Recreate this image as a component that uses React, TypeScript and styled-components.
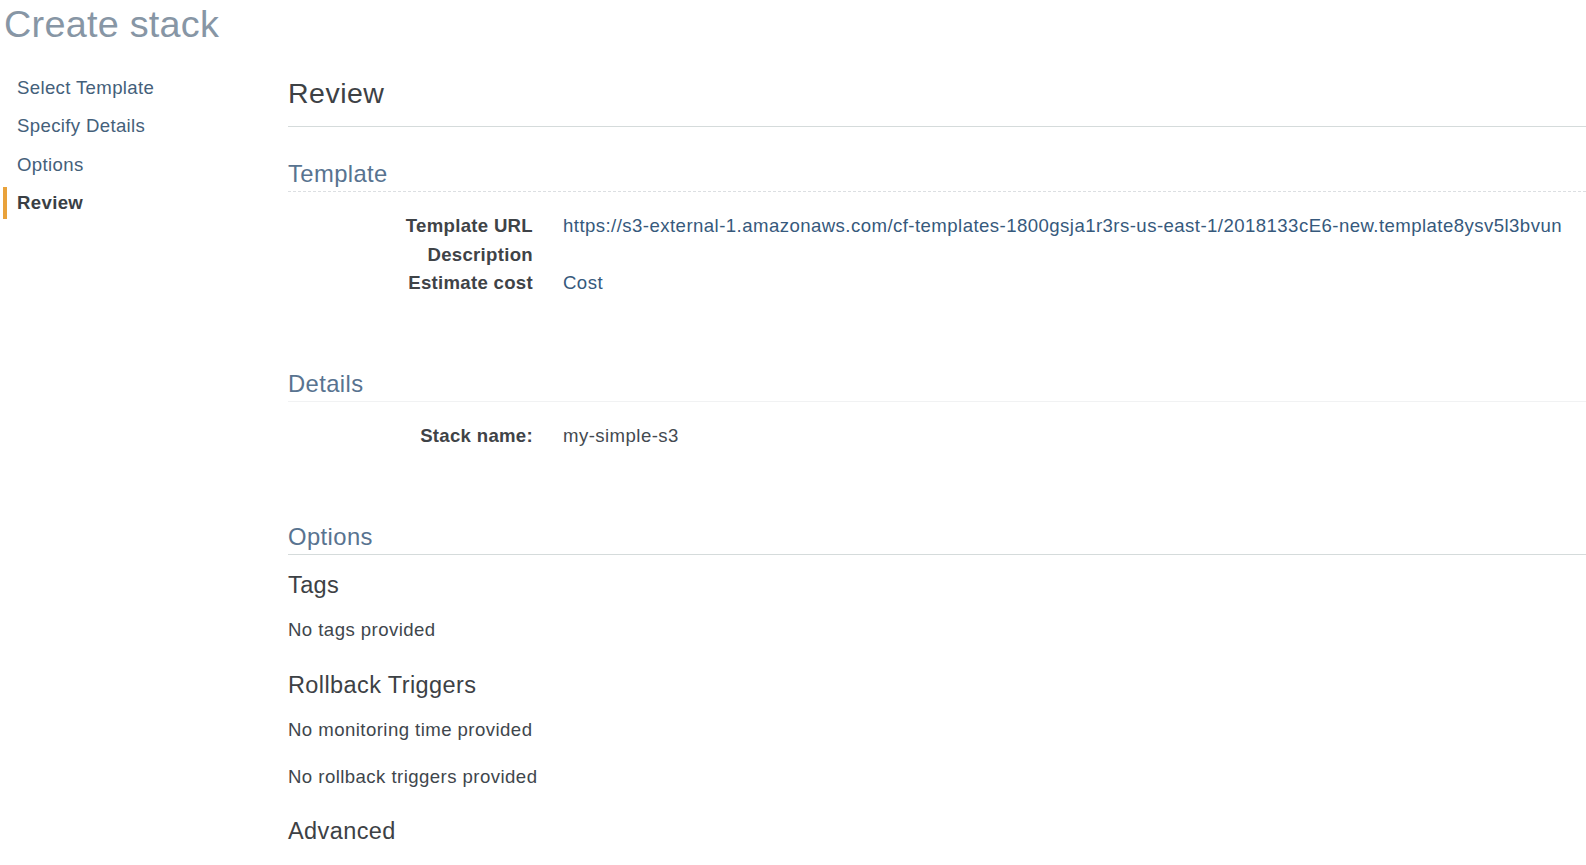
import React from "react";
import styled, { createGlobalStyle } from "styled-components";

const GlobalStyle = createGlobalStyle`
  html, body {
    margin: 0;
    padding: 0;
    background: #ffffff;
  }
  body {
    font-family: "Liberation Sans", Arial, Helvetica, sans-serif;
    color: #444;
    -webkit-font-smoothing: antialiased;
  }
  * { box-sizing: border-box; }
`;

const Page = styled.div`
  width: 1586px;
  height: 865px;
  overflow: hidden;
`;

const PageTitle = styled.h1`
  margin: 2px 0 0 4px;
  font-size: 37.8px;
  line-height: 44px;
  font-weight: 400;
  letter-spacing: 0.25px;
  color: #8796a5;
`;

const Body = styled.div`
  display: flex;
  align-items: flex-start;
`;

const Sidebar = styled.nav`
  width: 288px;
  flex: none;
  padding-top: 25.6px;
  display: flex;
  flex-direction: column;
  gap: 6.5px;
`;

const NavItem = styled.a<{ $active?: boolean }>`
  display: block;
  margin-left: 3px;
  padding-left: 10px;
  border-left: 4px solid ${(p) => (p.$active ? "#e9a23b" : "transparent")};
  font-size: 18.6px;
  line-height: 32px;
  letter-spacing: 0.35px;
  font-weight: ${(p) => (p.$active ? 700 : 400)};
  color: ${(p) => (p.$active ? "#3a3f45" : "#44607a")};
  text-decoration: none;
  white-space: nowrap;
`;

const Main = styled.main`
  flex: 1;
  min-width: 0;
  padding-top: 29.3px;
`;

const StepTitle = styled.h2`
  margin: 0;
  font-size: 28.5px;
  line-height: 36px;
  font-weight: 400;
  letter-spacing: 0.5px;
  color: #3d4145;
  padding-bottom: 14.7px;
  border-bottom: 1px solid #d5dbdb;
`;

const Section = styled.section<{ $gapTop: number }>`
  margin-top: ${(p) => p.$gapTop}px;
`;

const SectionTitle = styled.h3<{ $line: string }>`
  margin: 0;
  font-size: 23.8px;
  line-height: 30px;
  font-weight: 400;
  letter-spacing: 0.4px;
  color: #587390;
  padding-bottom: 2.6px;
  border-bottom: 1px ${(p) => p.$line};
`;

const KeyValues = styled.dl`
  margin: 19.8px 0 0 0;
  display: grid;
  grid-template-columns: 245px 1fr;
  column-gap: 30px;
  font-size: 18.6px;
  line-height: 28.5px;
`;

const Key = styled.dt`
  margin: 0;
  text-align: right;
  font-weight: 700;
  letter-spacing: 0.3px;
  color: #3f4347;
  white-space: nowrap;
`;

const Value = styled.dd<{ $link?: boolean }>`
  margin: 0;
  letter-spacing: 0.44px;
  color: ${(p) => (p.$link ? "#36597c" : "#444a50")};
  white-space: nowrap;
`;

const OptionsBody = styled.div`
  display: block;
`;

const SubTitle = styled.h4`
  margin: 26.4px 0 17px 0;
  font-size: 23.5px;
  line-height: 28px;
  font-weight: 400;
  letter-spacing: 0.4px;
  color: #3d4145;
  &:first-child {
    margin-top: 15.2px;
  }
`;

const Note = styled.p`
  margin: 17px 0 18.5px 0;
  font-size: 18.6px;
  line-height: 28.5px;
  letter-spacing: 0.44px;
  color: #40464c;
  white-space: nowrap;
`;

const steps = ["Select Template", "Specify Details", "Options", "Review"];

export default function App() {
  return (
    <Page>
      <GlobalStyle />
      <PageTitle>Create stack</PageTitle>
      <Body>
        <Sidebar>
          {steps.map((s) => (
            <NavItem key={s} $active={s === "Review"}>
              {s}
            </NavItem>
          ))}
        </Sidebar>
        <Main>
          <StepTitle>Review</StepTitle>

          <Section $gapTop={31.9}>
            <SectionTitle $line="dashed #dcdfe2">Template</SectionTitle>
            <KeyValues>
              <Key>Template URL</Key>
              <Value $link>
                https://s3-external-1.amazonaws.com/cf-templates-1800gsja1r3rs-us-east-1/2018133cE6-new.template8ysv5l3bvun
              </Value>
              <Key>Description</Key>
              <Value />
              <Key>Estimate cost</Key>
              <Value $link>Cost</Value>
            </KeyValues>
          </Section>

          <Section $gapTop={71.1}>
            <SectionTitle $line="solid #f1f2f3">Details</SectionTitle>
            <KeyValues>
              <Key>Stack name:</Key>
              <Value>my-simple-s3</Value>
            </KeyValues>
          </Section>

          <Section $gapTop={71.1}>
            <SectionTitle $line="solid #d5dbdb">Options</SectionTitle>
            <OptionsBody>
              <SubTitle>Tags</SubTitle>
              <Note>No tags provided</Note>
              <SubTitle>Rollback Triggers</SubTitle>
              <Note>No monitoring time provided</Note>
              <Note>No rollback triggers provided</Note>
              <SubTitle>Advanced</SubTitle>
            </OptionsBody>
          </Section>
        </Main>
      </Body>
    </Page>
  );
}
